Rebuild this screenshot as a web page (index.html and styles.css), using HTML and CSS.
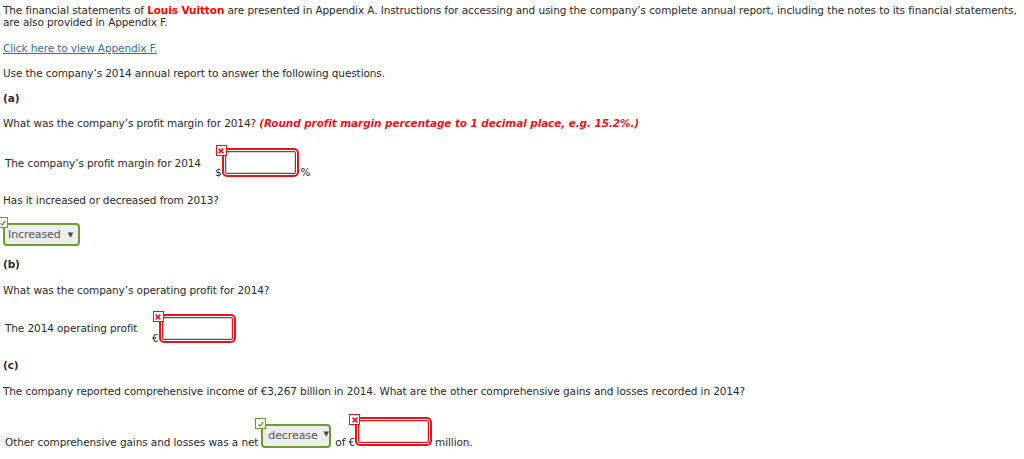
FILE: index.html
```
<!DOCTYPE html>
<html>
<head>
<meta charset="utf-8">
<link rel="stylesheet" href="styles.css">
</head>
<body>
<p class="intro">The financial statements of <span class="brand">Louis Vuitton</span> are presented in Appendix A. Instructions for accessing and using the company’s complete annual report, including the notes to its financial statements, are also provided in Appendix F.</p>
<p class="link-p"><a class="link" href="#">Click here to view Appendix F.</a></p>
<p class="gap13">Use the company’s 2014 annual report to answer the following questions.</p>
<p class="gap13 part">(a)</p>
<p class="gap13">What was the company’s profit margin for 2014? <em class="note">(Round profit margin percentage to 1 decimal place, e.g. 15.2%.)</em></p>

<div class="row row-a">
  <span class="lbl lbl-a">The company’s profit margin for 2014</span>
  <span class="group">
    <span class="unit">$</span>
    <span class="field"><span class="xmark"><svg viewBox="0 0 10 10" width="8" height="8"><path d="M2 2 L8 8 M8 2 L2 8" stroke="#e8141c" stroke-width="2"/></svg></span></span>
    <span class="unit pct">%</span>
  </span>
</div>

<p class="gap17">Has it increased or decreased from 2013?</p>

<div class="sel-row">
  <span class="select"><span class="check"><svg viewBox="0 0 10 10" width="8" height="8"><path d="M2 5.5 L4 7.5 L8 2.5" fill="none" stroke="#6c9b2e" stroke-width="1.6"/></svg></span>Increased<span class="arrow">▼</span></span>
</div>

<p class="gap12 part">(b)</p>
<p class="gap14">What was the company’s operating profit for 2014?</p>

<div class="row row-b">
  <span class="lbl lbl-b">The 2014 operating profit</span>
  <span class="group">
    <span class="unit">€</span>
    <span class="field"><span class="xmark"><svg viewBox="0 0 10 10" width="8" height="8"><path d="M2 2 L8 8 M8 2 L2 8" stroke="#e8141c" stroke-width="2"/></svg></span></span>
  </span>
</div>

<p class="gap16 part">(c)</p>
<p class="gap14">The company reported comprehensive income of €3,267 billion in 2014. What are the other comprehensive gains and losses recorded in 2014?</p>

<div class="row row-c">
  <span class="txt">Other comprehensive gains and losses was a net</span>
  <span class="select select-c"><span class="check"><svg viewBox="0 0 10 10" width="8" height="8"><path d="M2 5.5 L4 7.5 L8 2.5" fill="none" stroke="#6c9b2e" stroke-width="1.6"/></svg></span>decrease<span class="arrow">▼</span></span>
  <span class="txt of">of €</span>
  <span class="field field-c"><span class="xmark"><svg viewBox="0 0 10 10" width="8" height="8"><path d="M2 2 L8 8 M8 2 L2 8" stroke="#e8141c" stroke-width="2"/></svg></span></span>
  <span class="txt mil">million.</span>
</div>
</body>
</html>
```
FILE: styles.css
```
html, body {
  margin: 0;
  background: #fff;
}
html { min-height: 459px; }
body {
  min-height: 459px;
  box-sizing: border-box;
  padding: 4px 3px 0 3px;
  font-family: "DejaVu Sans", Verdana, sans-serif;
  font-size: 10.5px;
  letter-spacing: -0.1px;
  line-height: 12px;
  color: #2b2b2b;
}
p { margin: 0; }
.brand { color: #f00; font-weight: bold; }
.link-p { margin-top: 14px; }
.link { color: #3a6c9a; text-decoration: underline; }
.gap12 { margin-top: 12px; }
.gap13 { margin-top: 13px; }
.gap14 { margin-top: 14px; }
.gap16 { margin-top: 16px; }
.gap17 { margin-top: 17px; }
.part { font-weight: bold; }
.note { color: #e8141c; font-weight: bold; font-style: italic; }

.row {
  display: flex;
  align-items: flex-start;
}
.row-a { margin-top: 19px; padding-left: 2px; }
.row-b { margin-top: 18px; padding-left: 2px; }
.row-c { margin-top: 20px; padding-left: 2px; align-items: flex-end; }
.lbl-a { width: 210px; padding-top: 9px; }
.lbl-b { width: 147px; padding-top: 8px; }

.group {
  display: inline-flex;
  align-items: flex-end;
}
.unit { line-height: 12px; margin-bottom: -1px; }
.pct { margin-left: 2px; }
.field {
  position: relative;
  display: inline-block;
  width: 77px;
  height: 29px;
  box-sizing: border-box;
  border: 2px solid #e8141c;
  border-radius: 5px;
  background: #fff;
  box-shadow: inset 0 0 0 1px #fff, inset 0 0 0 2px #e8141c, inset 0 0 0 3px #d6d6d6;
}
.field-c { margin-bottom: 2px; }
.xmark {
  position: absolute;
  left: -8px;
  top: -5px;
  width: 11px;
  height: 11px;
  box-sizing: border-box;
  border: 1px solid #e8141c;
  background: #fff;
  display: flex;
  align-items: center;
  justify-content: center;
}
.xmark svg { display: block; }

.sel-row { margin-top: 17px; display: flex; }
.select {
  position: relative;
  display: inline-flex;
  align-items: center;
  height: 23px;
  box-sizing: border-box;
  border: 2px solid #6c9b2e;
  border-radius: 4px;
  background: #ededed;
  color: #555;
  padding: 0 5px 0 3px;
  font-size: 11px;
}
.sel-row .select { width: 77px; }
.arrow { font-size: 7px; margin-left: auto; color: #444; }
.select-c {
  width: 70px;
  height: 24px;
  margin-left: 3px;
  padding: 0 4px 0 5px;
  font-size: 11px;
}
.select-c .arrow { margin-left: 6px; margin-bottom: 4px; }
.check {
  position: absolute;
  left: -8px;
  top: -8px;
  width: 11px;
  height: 11px;
  box-sizing: border-box;
  border: 1px solid #6c9b2e;
  background: #fff;
  display: flex;
  align-items: center;
  justify-content: center;
}
.check svg { display: block; }
.txt { line-height: 12px; }
.of { margin-left: 4px; margin-right: 0; }
.mil { margin-left: 3px; }
```
